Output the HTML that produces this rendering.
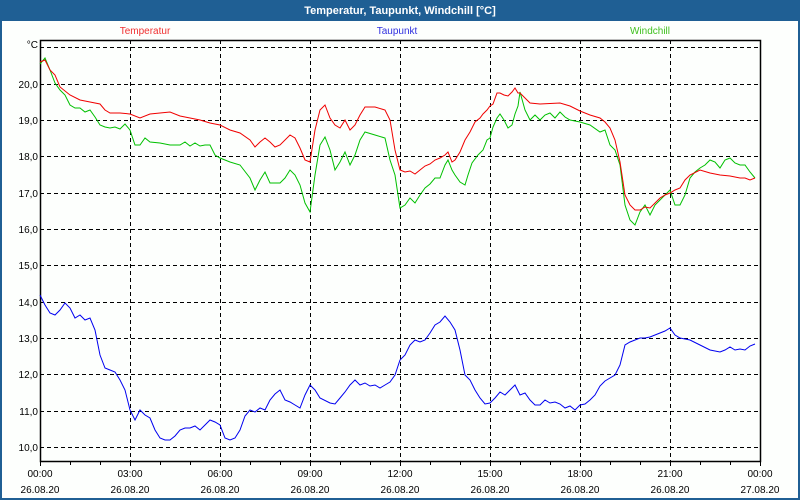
<!DOCTYPE html>
<html><head><meta charset="utf-8"><style>
html,body{margin:0;padding:0;width:800px;height:500px;overflow:hidden;background:#1f5f94}
svg{display:block}
</style></head><body>
<svg width="800" height="500" xmlns="http://www.w3.org/2000/svg" font-family="Liberation Sans, sans-serif" font-size="10">
<rect x="0" y="0" width="800" height="500" fill="#1f5f94"/>
<rect x="2" y="21" width="796" height="477" fill="#fdfffd"/>
<text x="400" y="14" fill="#fff" font-weight="bold" font-size="11" text-anchor="middle">Temperatur, Taupunkt, Windchill [°C]</text>
<text x="145" y="34" fill="#f03030" text-anchor="middle">Temperatur</text>
<text x="397" y="34" fill="#3030e0" text-anchor="middle">Taupunkt</text>
<text x="650" y="34" fill="#40c020" text-anchor="middle">Windchill</text>
<g stroke="#000" stroke-width="1" stroke-dasharray="4,3" fill="none">
<path d="M40 47.5H760M40 84.5H760M40 120.5H760M40 156.5H760M40 193.5H760M40 229.5H760M40 265.5H760M40 302.5H760M40 338.5H760M40 374.5H760M40 411.5H760M40 447.5H760"/>
<path d="M130.5 40V461M220.5 40V461M310.5 40V461M400.5 40V461M490.5 40V461M580.5 40V461M670.5 40V461"/>
</g>
<rect x="40.5" y="40.5" width="720" height="421" fill="none" stroke="#000" stroke-width="1.5"/>
<g stroke="#000"><path d="M40.5 461V466M70.5 461V465M100.5 461V465M130.5 461V466M160.5 461V465M190.5 461V465M220.5 461V466M250.5 461V465M280.5 461V465M310.5 461V466M340.5 461V465M370.5 461V465M400.5 461V466M430.5 461V465M460.5 461V465M490.5 461V466M520.5 461V465M550.5 461V465M580.5 461V466M610.5 461V465M640.5 461V465M670.5 461V466M700.5 461V465M730.5 461V465M760.5 461V466"/></g>
<g text-anchor="end" fill="#000">
<text x="38" y="48">°C</text>
<text x="38" y="88">20,0</text><text x="38" y="124">19,0</text><text x="38" y="160">18,0</text><text x="38" y="197">17,0</text><text x="38" y="233">16,0</text><text x="38" y="269">15,0</text><text x="38" y="306">14,0</text><text x="38" y="342">13,0</text><text x="38" y="378">12,0</text><text x="38" y="415">11,0</text><text x="38" y="451">10,0</text>
</g>
<g text-anchor="middle" fill="#000">
<text x="40" y="477">00:00</text><text x="130" y="477">03:00</text><text x="220" y="477">06:00</text><text x="310" y="477">09:00</text><text x="400" y="477">12:00</text><text x="490" y="477">15:00</text><text x="580" y="477">18:00</text><text x="670" y="477">21:00</text><text x="760" y="477">00:00</text>
<text x="40" y="493">26.08.20</text><text x="130" y="493">26.08.20</text><text x="220" y="493">26.08.20</text><text x="310" y="493">26.08.20</text><text x="400" y="493">26.08.20</text><text x="490" y="493">26.08.20</text><text x="580" y="493">26.08.20</text><text x="670" y="493">26.08.20</text><text x="760" y="493">27.08.20</text>
</g>
<g fill="none" stroke-width="1">
<polyline stroke="#00c000" points="40,64 45,58 50,70 55,83 60,90 65,95 70,105 75,108 80,108 85,112 90,110 95,117 100,125 105,127 110,128 115,127 120,129 125,124 130,130 135,145 140,145 145,138 150,142 160,143 170,145 180,145 185,142 190,146 195,143 200,146 205,145 210,145 215,155 220,158 230,162 240,165 250,178 255,190 260,180 265,172 270,183 280,183 285,178 290,170 295,175 300,185 305,203 310,212 315,175 320,145 325,137 330,150 335,170 340,162 345,152 350,165 355,155 360,140 365,132 375,135 385,138 390,160 395,175 400,208 405,205 410,198 415,203 420,195 425,188 430,184 435,178 440,178 445,165 448,160 452,170 455,175 460,182 465,185 468,175 472,163 478,155 483,150 487,140 490,138 493,127 497,118 500,114 504,120 508,128 512,125 515,114 518,106 520,92 525,110 530,120 535,115 540,120 545,115 550,113 555,118 560,112 565,117 570,120 580,122 590,125 600,132 605,130 610,145 615,150 620,165 625,205 630,220 635,225 640,212 645,205 650,215 655,205 660,200 665,195 670,190 675,205 680,205 685,195 690,178 695,172 700,168 705,165 710,160 715,162 720,168 725,160 730,158 735,163 740,165 745,165 750,172 755,178"/>
<polyline stroke="#f00000" points="40,62 45,60 50,70 55,75 60,87 70,95 80,100 90,102 100,104 105,110 110,113 120,113 130,114 140,118 150,114 160,113 170,112 180,116 190,118 200,120 210,123 220,125 230,130 240,133 250,140 255,147 260,142 265,138 270,142 275,147 280,145 290,135 295,138 300,148 305,160 310,162 315,130 320,110 325,105 330,118 335,125 340,128 345,120 350,130 355,125 360,115 365,107 375,107 385,110 390,120 395,150 400,170 405,172 410,171 415,174 420,170 425,166 430,164 435,160 440,158 445,155 448,152 452,162 455,160 460,152 465,140 470,132 475,122 480,118 483,114 487,110 490,106 493,104 497,93 500,93 504,95 508,96 512,92 515,88 518,93 520,93 525,98 530,103 540,104 560,103 570,106 580,111 590,115 600,118 605,122 610,128 615,140 620,162 625,195 630,205 635,210 640,210 645,207 650,208 660,198 665,195 670,193 675,190 680,188 685,180 690,175 700,170 710,173 720,175 730,176 740,178 745,178 750,180 755,178"/>
<polyline stroke="#0000f0" points="40,295 45,305 50,313 55,315 60,310 65,303 70,308 75,318 80,315 85,320 90,318 95,330 100,355 105,368 110,370 115,372 120,380 125,390 130,410 135,420 140,410 145,415 150,418 155,430 160,438 165,440 170,440 175,436 180,430 185,428 190,428 195,426 200,430 205,425 210,420 215,422 220,425 225,438 230,440 235,438 240,430 245,416 250,410 255,412 260,408 265,410 270,400 275,394 280,390 285,400 290,402 295,405 300,408 305,395 310,385 315,390 320,398 330,403 335,404 340,398 345,392 350,385 355,380 360,385 365,383 370,386 375,385 380,388 385,385 390,382 395,375 400,360 405,355 410,345 415,340 420,342 425,340 430,333 435,325 440,322 445,316 450,322 455,330 460,350 465,375 470,380 475,390 480,398 485,404 490,403 495,398 500,392 505,395 510,390 515,385 520,395 525,393 530,400 535,405 540,405 545,400 550,403 555,402 560,404 565,408 570,406 575,410 580,405 585,404 590,400 595,395 600,386 605,381 610,378 615,375 620,365 625,345 630,342 635,340 640,338 645,338 650,337 660,333 665,331 670,328 675,335 680,338 690,340 700,345 710,350 720,352 725,350 730,347 735,350 740,349 745,350 750,346 755,344"/>
</g>
</svg>
</body></html>
